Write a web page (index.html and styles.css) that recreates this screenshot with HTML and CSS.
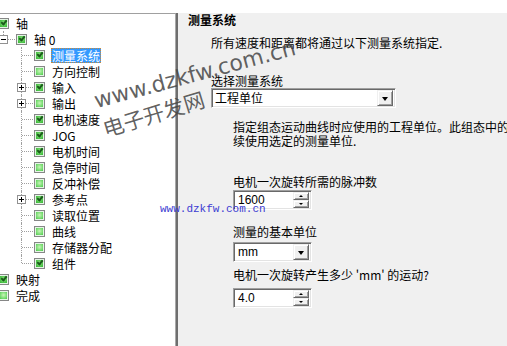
FILE: index.html
```html
<!DOCTYPE html>
<html lang="zh-CN">
<head>
    <meta charset="UTF-8">
    <title>测量系统</title>
    <link rel="stylesheet" href="styles.css">
</head>
<body>

    <div class="window">
        <div class="tree">
            <div class="tree-inner">
                <div class="row"><span class="cb on"></span><span class="lbl">轴</span></div>
                <div class="row"><span class="conn last"><span class="exp"></span></span><span class="cb on"></span><span class="lbl">轴 0</span></div>
                <div class="row"><span class="pad"></span><span class="conn"></span><span class="cb on"></span><span class="lbl sel">测量系统</span></div>
                <div class="row"><span class="pad"></span><span class="conn"></span><span class="cb"></span><span class="lbl">方向控制</span></div>
                <div class="row"><span class="pad"></span><span class="conn"><span class="exp plus"></span></span><span class="cb on"></span><span class="lbl">输入</span></div>
                <div class="row"><span class="pad"></span><span class="conn"><span class="exp plus"></span></span><span class="cb"></span><span class="lbl">输出</span></div>
                <div class="row"><span class="pad"></span><span class="conn"></span><span class="cb on"></span><span class="lbl">电机速度</span></div>
                <div class="row"><span class="pad"></span><span class="conn"></span><span class="cb on"></span><span class="lbl">JOG</span></div>
                <div class="row"><span class="pad"></span><span class="conn"></span><span class="cb on"></span><span class="lbl">电机时间</span></div>
                <div class="row"><span class="pad"></span><span class="conn"></span><span class="cb"></span><span class="lbl">急停时间</span></div>
                <div class="row"><span class="pad"></span><span class="conn"></span><span class="cb"></span><span class="lbl">反冲补偿</span></div>
                <div class="row"><span class="pad"></span><span class="conn"><span class="exp plus"></span></span><span class="cb on"></span><span class="lbl">参考点</span></div>
                <div class="row"><span class="pad"></span><span class="conn"></span><span class="cb"></span><span class="lbl">读取位置</span></div>
                <div class="row"><span class="pad"></span><span class="conn"></span><span class="cb"></span><span class="lbl">曲线</span></div>
                <div class="row"><span class="pad"></span><span class="conn"></span><span class="cb"></span><span class="lbl">存储器分配</span></div>
                <div class="row"><span class="pad"></span><span class="conn last"></span><span class="cb on"></span><span class="lbl">组件</span></div>
                <div class="row"><span class="cb on"></span><span class="lbl">映射</span></div>
                <div class="row"><span class="cb"></span><span class="lbl">完成</span></div>
            </div>
        </div>

        <div class="panel">
            <div class="title">测量系统</div>
            <div class="intro">所有速度和距离都将通过以下测量系统指定.</div>

            <div class="field first">
                <div class="caption">选择测量系统</div>
                <div class="combo wide"><span class="val">工程单位</span><span class="drop"></span></div>
            </div>

            <div class="sub">
                <p class="desc">指定组态运动曲线时应使用的工程单位。此组态中的所有<br>续使用选定的测量单位.</p>

                <div class="caption c-pulses">电机一次旋转所需的脉冲数</div>
                <div class="spin"><span class="val">1600</span><span class="btns"><span class="up"></span><span class="dn"></span></span></div>

                <div class="caption c-unit">测量的基本单位</div>
                <div class="combo small"><span class="val">mm</span><span class="drop"></span></div>

                <div class="caption c-move">电机一次旋转产生多少 'mm' 的运动?</div>
                <div class="spin"><span class="val">4.0</span><span class="btns"><span class="up"></span><span class="dn"></span></span></div>
            </div>
        </div>
    </div>

    <div class="wm wm-url">www.dzkfw.com.cn</div>
    <div class="wm wm-cn">电子开发网</div>
    <div class="wm-small">www.dzkfw.com.cn</div>

</body>
</html>
```

FILE: styles.css
```css
body {
    margin: 0; padding-top: 13px; height: 333px; overflow: hidden; background: #fff;
    font-family: "Noto Sans CJK SC", "Liberation Sans", sans-serif; font-size: 12px; color: #000;
    position: relative;
}
.window { display: flex; height: 333px; }

/* tree */
.tree {
    width: 175px; flex: none; overflow: hidden; background: #fff;
    border-top: 1px solid #a0a0a0; border-right: 1px solid #a8a8a8; padding-top: 1px;
}
.tree-inner { margin-left: -2px; }
.row { display: flex; align-items: center; height: 16px; white-space: nowrap; }
.pad { width: 18px; flex: none; }
.conn { width: 18px; height: 16px; flex: none; position: relative; }
.conn::before {
    content: ""; position: absolute; left: 5px; top: 0; height: 16px;
    border-left: 1px dotted #a0a0a0;
}
.conn.last::before { height: 8px; }
.conn::after {
    content: ""; position: absolute; left: 6px; right: 1px; top: 8px;
    border-top: 1px dotted #a0a0a0;
}
.exp {
    position: absolute; left: 1px; top: 4px; width: 9px; height: 9px; box-sizing: border-box;
    border: 1px solid #919191; background: #fff; z-index: 1;
}
.exp::before { content: ""; position: absolute; left: 1px; top: 3px; width: 5px; height: 1px; background: #000; }
.exp.plus::after { content: ""; position: absolute; left: 3px; top: 1px; width: 1px; height: 5px; background: #000; }

.cb {
    width: 11px; height: 11px; flex: none; box-sizing: border-box; position: relative;
    border: 1px solid #868787; box-shadow: inset 0 0 0 1px #e6f5e6;
    background: radial-gradient(circle at 50% 45%, #c8f5b8 0, #6fd86a 55%, #30b030 100%);
}
.cb.on { background: radial-gradient(circle at 50% 45%, #8ee07e 0, #46c044 60%, #2a9e2a 100%); }
.cb.on::after {
    content: ""; position: absolute; left: 2px; top: 1px; width: 4px; height: 2px;
    border-left: 2px solid #1c5c1c; border-bottom: 2px solid #1c5c1c; transform: rotate(-50deg);
}
.lbl { margin-left: 6px; padding: 0 1px; line-height: 15px; }
.lbl.sel { background: #3399ff; color: #fff; outline: 1px dotted #c88a3c; outline-offset: -1px; }

/* right panel */
.panel {
    flex: 1; min-width: 0; overflow: hidden; background: #f0f0f0;
    border-left: 2px solid #6e6e6e; padding-left: 10px; line-height: 14px; white-space: nowrap;
}
.title { font-weight: bold; }
.intro { margin-top: 9px; padding-left: 23px; }
.field.first { margin-top: 24px; padding-left: 23px; }
.sub { padding-left: 45px; }
.desc { margin: 12px 0 0; }
.c-pulses { margin-top: 27px; }
.c-unit { margin-top: 15px; }
.c-move { margin-top: 6px; }

.combo, .spin {
    position: relative; height: 20px; box-sizing: border-box; background: #fff;
    border-top: 1px solid #a0a0a0; border-left: 1px solid #a0a0a0;
    border-right: 1px solid #fff; border-bottom: 1px solid #fff;
    box-shadow: inset 1px 1px 0 #696969, inset -1px -1px 0 #e3e3e3;
    display: flex; align-items: center; font-family: "Liberation Sans", "Noto Sans CJK SC", sans-serif;
}
.combo .val, .spin .val { padding-left: 4px; flex: 1; }
.combo.wide { width: 185px; }
.combo.wide .val { font-family: "Noto Sans CJK SC", sans-serif; padding-left: 3px; }
.combo.small { width: 79px; margin-top: 3px; }
.spin { width: 79px; margin-top: 1px; }
.c-move + .spin { margin-top: 6px; }

.drop {
    width: 16px; height: 16px; margin-right: 2px; box-sizing: border-box; background: #f0f0f0;
    border: 1px solid; border-color: #f0f0f0 #696969 #696969 #f0f0f0;
    box-shadow: inset 1px 1px 0 #fff, inset -1px -1px 0 #a0a0a0;
    display: flex; align-items: center; justify-content: center;
}
.drop::after {
    content: ""; width: 0; height: 0; margin-top: 1px;
    border-left: 3px solid transparent; border-right: 3px solid transparent; border-top: 4px solid #000;
}
.btns { width: 16px; height: 16px; margin-right: 2px; display: flex; flex-direction: column; }
.btns span {
    flex: 1; box-sizing: border-box; background: #f0f0f0;
    border: 1px solid; border-color: #f0f0f0 #696969 #696969 #f0f0f0;
    box-shadow: inset 1px 1px 0 #fff, inset -1px -1px 0 #a0a0a0;
    display: flex; align-items: center; justify-content: center;
}
.btns .up::after {
    content: ""; border-left: 2px solid transparent; border-right: 2px solid transparent; border-bottom: 2px solid #000;
}
.btns .dn::after {
    content: ""; border-left: 2px solid transparent; border-right: 2px solid transparent; border-top: 2px solid #000;
}

/* watermarks */
.wm {
    position: absolute; color: rgba(70, 70, 70, 0.85); white-space: nowrap;
    transform-origin: left bottom; pointer-events: none;
}
.wm-url {
    left: 98px; top: 88px; font-family: "DejaVu Sans", sans-serif; font-size: 22px; line-height: 26px;
    transform: rotate(-15deg);
}
.wm-cn {
    left: 107px; top: 115px; font-size: 21px; line-height: 26px;
    transform: rotate(-17deg);
}
.wm-small {
    position: absolute; left: 160px; top: 203px; font-family: "Liberation Mono", monospace;
    font-size: 11px; line-height: 13px; color: #3c3cd2; white-space: nowrap;
}
```
